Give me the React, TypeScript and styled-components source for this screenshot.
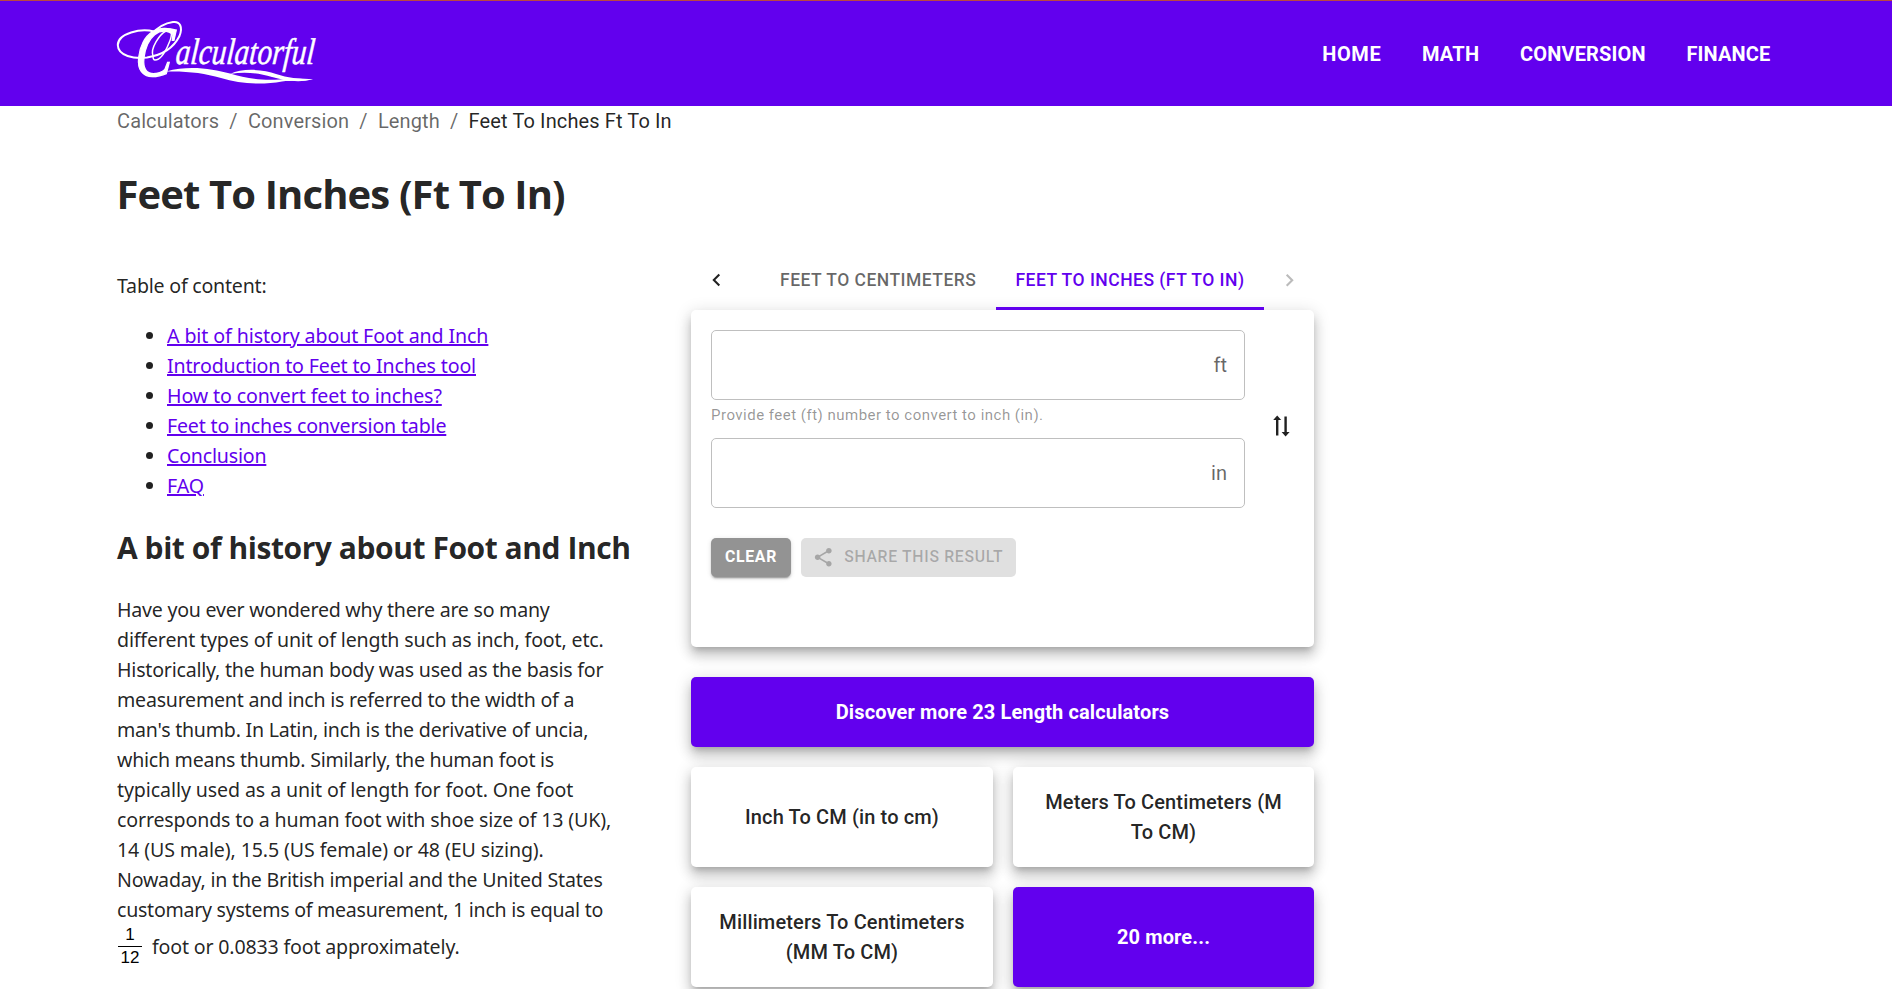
import React from 'react';
import styled, { createGlobalStyle, css } from 'styled-components';

const purple = '#6200ee';
const ink = 'rgba(0, 0, 0, 0.87)';
const raised =
  '0 5px 6px -3px rgba(0,0,0,.2), 0 9px 12px 1px rgba(0,0,0,.14), 0 3px 16px 2px rgba(0,0,0,.12)';

const GlobalStyle = createGlobalStyle`
  * { box-sizing: border-box; }
  html { overflow: hidden; }
  body {
    margin: 0;
    background: #fff;
    color: ${ink};
    font: 400 20px/30px Roboto, sans-serif;
  }
`;

const Page = styled.div`
  height: 989px;
  overflow: hidden;
`;

const Header = styled.header`
  display: flex;
  align-items: center;
  justify-content: space-between;
  height: 106px;
  padding: 0 121.5px 0 115px;
  border-top: 1px solid #b9493f;
  background: ${purple};
  color: #fff;
`;

const Logo = styled.svg`
  display: block;
  width: 204px;
  height: 74px;
  margin-bottom: 3px;
  overflow: visible;
`;

const Nav = styled.nav`
  display: flex;
  gap: 40.7px;
`;

const NavLink = styled.a<{ $track: number }>`
  font-weight: 700;
  letter-spacing: ${(p) => p.$track}px;
  color: #fff;
`;

const Breadcrumbs = styled.nav`
  display: flex;
  padding-left: 117px;
  letter-spacing: 0.12px;
  color: rgba(0, 0, 0, 0.6);
`;

const Separator = styled.span`
  margin: 0 10.2px;
`;

const Current = styled.span`
  color: ${ink};
`;

const Title = styled.h1`
  margin: 28px 0 0 116.5px;
  font: 700 40px/60px 'Open Sans', sans-serif;
  letter-spacing: -0.88px;
  white-space: nowrap;
`;

const Columns = styled.main`
  display: grid;
  grid-template-columns: 574px 623px;
  padding: 26px 0 0 117px;
`;

const Article = styled.article`
  padding-top: 21px;
  font: 400 19.6px/30px 'Noto Sans', sans-serif;
`;

const Line = styled.span<{ $track: number }>`
  letter-spacing: ${(p) => p.$track}px;
  white-space: nowrap;
`;

const Contents = styled.ul`
  margin: 20px 0 0;
  padding-left: 50px;
`;

const Anchor = styled.a<{ $track: number }>`
  letter-spacing: ${(p) => p.$track}px;
  color: ${purple};
  text-decoration: underline;
  text-decoration-thickness: 2px;
  text-underline-offset: 1px;
  white-space: nowrap;
`;

const SectionTitle = styled.h2`
  margin: 24px 0 25px 0;
  font: 700 30px/45px 'Open Sans', sans-serif;
  letter-spacing: -0.44px;
  white-space: nowrap;
`;

const Paragraph = styled.p`
  display: flex;
  flex-direction: column;
  margin: 0;
`;

const LastLine = styled.span`
  display: flex;
  align-items: center;
`;

const Fraction = styled.span`
  display: flex;
  flex-direction: column;
  width: 24px;
  margin: -1px 10px 0 1px;
  font: 400 17px/22px 'Liberation Sans', Arial, sans-serif;
  text-align: center;
  color: #000;
`;

const Numerator = styled.span`
  border-bottom: 1.4px solid #000;
`;

const Tabs = styled.div`
  display: flex;
  height: 60px;
`;

const TabArrow = styled.button<{ $faded?: boolean }>`
  display: flex;
  align-items: center;
  justify-content: center;
  width: 50px;
  padding: 0;
  border: 0;
  background: none;
  color: ${ink};
  opacity: ${(p) => (p.$faded ? 0.3 : 1)};

  svg { width: 25px; height: 25px; }
`;

const TabList = styled.div`
  display: flex;
  flex: 1;
  justify-content: flex-end;
`;

const Tab = styled.div<{ $active?: boolean }>`
  position: relative;
  z-index: 1;
  padding: 0 19.5px;
  font-size: 17.5px;
  font-weight: 500;
  line-height: 60px;
  letter-spacing: 0.48px;
  color: ${(p) => (p.$active ? purple : 'rgba(0, 0, 0, 0.6)')};
  ${(p) => p.$active && css`box-shadow: inset 0 -3px ${purple};`}
`;

const Card = styled.section`
  height: 337px;
  padding: 20px;
  border-radius: 5px;
  background: #fff;
  box-shadow: ${raised};
`;

const Converter = styled.div`
  display: flex;
  align-items: center;
  justify-content: space-between;
  padding-right: 4px;
`;

const Fields = styled.div`
  width: 534px;
`;

const Field = styled.div`
  display: flex;
  align-items: center;
  justify-content: flex-end;
  height: 70px;
  padding-right: 17px;
  border: 1px solid #bfbfbf;
  border-radius: 5px;
  color: rgba(0, 0, 0, 0.6);
`;

const Helper = styled.p`
  margin: 0;
  padding: 3px 0 10px;
  font-size: 15px;
  line-height: 25px;
  letter-spacing: 0.49px;
  color: rgba(0, 0, 0, 0.42);
`;

const SwapIcon = styled.svg`
  width: 17px;
  height: 22px;
  margin-top: 13px;
`;

const Actions = styled.div`
  display: flex;
  gap: 10px;
  margin-top: 30px;
`;

const Button = styled.button<{ $disabled?: boolean }>`
  display: flex;
  align-items: center;
  justify-content: center;
  width: ${(p) => (p.$disabled ? 215 : 80)}px;
  height: 39px;
  padding: 0 0 2px;
  border: 0;
  border-radius: 5px;
  font: ${(p) => (p.$disabled ? 500 : 700)} 15.8px/26px Roboto, sans-serif;
  letter-spacing: 0.68px;
  white-space: nowrap;
  background: ${(p) => (p.$disabled ? '#e0e0e0' : '#939393')};
  color: ${(p) => (p.$disabled ? 'rgba(0, 0, 0, 0.26)' : '#fff')};
  ${(p) =>
    !p.$disabled &&
    css`box-shadow: 0 3px 1px -2px rgba(0,0,0,.2), 0 2px 2px rgba(0,0,0,.14), 0 1px 5px rgba(0,0,0,.12);`}

  svg { width: 22.5px; height: 22.5px; margin: 2px 10px 0 -2px; }
`;

const Discover = styled.a`
  display: flex;
  align-items: center;
  justify-content: center;
  height: 70px;
  margin: 30px 0 20px;
  border-radius: 5px;
  background: ${purple};
  box-shadow: ${raised};
  font-weight: 700;
  letter-spacing: 0.12px;
  color: #fff;
`;

const Tiles = styled.div`
  display: grid;
  grid-template-columns: 302px 301px;
  gap: 20px;
`;

const Tile = styled.a<{ $filled?: boolean }>`
  display: flex;
  flex-direction: column;
  align-items: center;
  justify-content: center;
  height: 100px;
  border-radius: 5px;
  box-shadow: ${raised};
  font-weight: ${(p) => (p.$filled ? 700 : 500)};
  letter-spacing: 0.13px;
  background: ${(p) => (p.$filled ? purple : '#fff')};
  color: ${(p) => (p.$filled ? '#fff' : ink)};
`;

const navLinks: [string, number][] = [
  ['HOME', 0.6],
  ['MATH', 0.25],
  ['CONVERSION', 0.15],
  ['FINANCE', 0.15],
];

const contents: [string, number][] = [
  ['A bit of history about Foot and Inch', -0.1],
  ['Introduction to Feet to Inches tool', -0.15],
  ['How to convert feet to inches?', -0.1],
  ['Feet to inches conversion table', -0.18],
  ['Conclusion', -0.2],
  ['FAQ', -0.1],
];

const history: [string, number][] = [
  ['Have you ever wondered why there are so many', -0.24],
  ['different types of unit of length such as inch, foot, etc.', -0.16],
  ['Historically, the human body was used as the basis for', -0.22],
  ['measurement and inch is referred to the width of a', -0.24],
  ["man's thumb. In Latin, inch is the derivative of uncia,", -0.23],
  ['which means thumb. Similarly, the human foot is', -0.26],
  ['typically used as a unit of length for foot. One foot', -0.1],
  ['corresponds to a human foot with shoe size of 13 (UK),', -0.15],
  ['14 (US male), 15.5 (US female) or 48 (EU sizing).', -0.11],
  ['Nowaday, in the British imperial and the United States', -0.21],
  ['customary systems of measurement, 1 inch is equal to', -0.27],
];

const tiles = [['Inch To CM (in to cm)'], ['Meters To Centimeters (M', 'To CM)'], ['Millimeters To Centimeters', '(MM To CM)']];

const CalculatorfulLogo = () => (
  <Logo viewBox="115 15 204 74" fill="none" stroke="#fff" strokeLinecap="round">
    <path strokeWidth="2" d="M154 31.5C141 28 118 33 117.8 45C118 56 134 59 147 57.5C163 55 174 47 179.5 36C183 27 180 21 173 22C166 23 158 27 152 34" />
    <path strokeWidth="1.5" d="M153 56C150 48 160 34 166 31C172 28 173 34 169 43C165 53 160 60 155 60Q153 60 153 56" />
    <g fill="#fff" fontFamily="'Liberation Serif', serif" fontStyle="italic">
      <text transform="translate(133.5 76.3) skewX(-6) scale(.78 1)" fontSize="72" strokeWidth="1.4">C</text>
      <text transform="translate(175 64) skewX(-5) scale(.795 1)" fontSize="37" strokeWidth=".5">alculatorful</text>
    </g>
    <path fill="#fff" stroke="none" d="M166 71.5C190 65 212 69 230 73.5C246 78 262 82 290 78.6C298 78 306 79 313 79C300 82 292 80 282 81.5C262 85 240 84 221 78C204 73 188 71 166 71.5Z" />
    <path fill="#fff" stroke="none" d="M230 74C243 67.5 264 69.5 276 74C288 78 298 79 313 79.3C299 83 284 80.5 272 77C258 73 245 71.5 230 74Z" />
  </Logo>
);

export default function App() {
  return (
    <Page>
      <GlobalStyle />
      <Header>
        <CalculatorfulLogo />
        <Nav>
          {navLinks.map(([label, track]) => (
            <NavLink key={label} $track={track}>{label}</NavLink>
          ))}
        </Nav>
      </Header>
      <Breadcrumbs>
        <span>Calculators</span>
        <Separator>/</Separator>
        <span>Conversion</span>
        <Separator>/</Separator>
        <span>Length</span>
        <Separator>/</Separator>
        <Current>Feet To Inches Ft To In</Current>
      </Breadcrumbs>
      <Title>Feet To Inches (Ft To In)</Title>
      <Columns>
        <Article>
          <Line $track={-0.22}>Table of content:</Line>
          <Contents>
            {contents.map(([label, track]) => (
              <li key={label}><Anchor $track={track}>{label}</Anchor></li>
            ))}
          </Contents>
          <SectionTitle>A bit of history about Foot and Inch</SectionTitle>
          <Paragraph>
            {history.map(([text, track]) => (
              <Line key={text} $track={track}>{text}</Line>
            ))}
            <LastLine>
              <Fraction>
                <Numerator>1</Numerator>
                <span>12</span>
              </Fraction>
              <Line $track={-0.17}>foot or 0.0833 foot approximately.</Line>
            </LastLine>
          </Paragraph>
        </Article>
        <div>
          <Tabs>
            <TabArrow>
              <svg viewBox="0 0 24 24" fill="currentColor"><path d="M15.41 16.09l-4.58-4.59 4.58-4.59L14 5.5l-6 6 6 6z" /></svg>
            </TabArrow>
            <TabList>
              <Tab>FEET TO CENTIMETERS</Tab>
              <Tab $active>FEET TO INCHES (FT TO IN)</Tab>
            </TabList>
            <TabArrow $faded>
              <svg viewBox="0 0 24 24" fill="currentColor"><path d="M8.59 16.34l4.58-4.59-4.58-4.59L10 5.75l6 6-6 6z" /></svg>
            </TabArrow>
          </Tabs>
          <Card>
            <Converter>
              <Fields>
                <Field>ft</Field>
                <Helper>Provide feet (ft) number to convert to inch (in).</Helper>
                <Field>in</Field>
              </Fields>
              <SwapIcon viewBox="0 0 17 22" fill="#212121">
                <path d="M4.2 0.5L8.2 5H5.4V20.5H3V5H0.2Z M12.6 21.5L8.6 17H11.4V1.5H13.8V17H16.6Z" />
              </SwapIcon>
            </Converter>
            <Actions>
              <Button>CLEAR</Button>
              <Button $disabled>
                <svg viewBox="0 0 24 24" fill="currentColor">
                  <path d="M18 16.08c-.76 0-1.44.3-1.96.77L8.91 12.7c.05-.23.09-.46.09-.7s-.04-.47-.09-.7l7.05-4.11c.54.5 1.25.81 2.04.81 1.66 0 3-1.34 3-3s-1.34-3-3-3-3 1.34-3 3c0 .24.04.47.09.7L8.04 9.81C7.5 9.31 6.79 9 6 9c-1.66 0-3 1.34-3 3s1.34 3 3 3c.79 0 1.5-.31 2.04-.81l7.12 4.16c-.05.21-.08.43-.08.65 0 1.61 1.31 2.92 2.92 2.92s2.92-1.31 2.92-2.92-1.31-2.92-2.92-2.92z" />
                </svg>
                SHARE THIS RESULT
              </Button>
            </Actions>
          </Card>
          <Discover>Discover more 23 Length calculators</Discover>
          <Tiles>
            {tiles.map((lines) => (
              <Tile key={lines[0]}>
                {lines.map((line) => <span key={line}>{line}</span>)}
              </Tile>
            ))}
            <Tile $filled>20 more...</Tile>
          </Tiles>
        </div>
      </Columns>
    </Page>
  );
}
